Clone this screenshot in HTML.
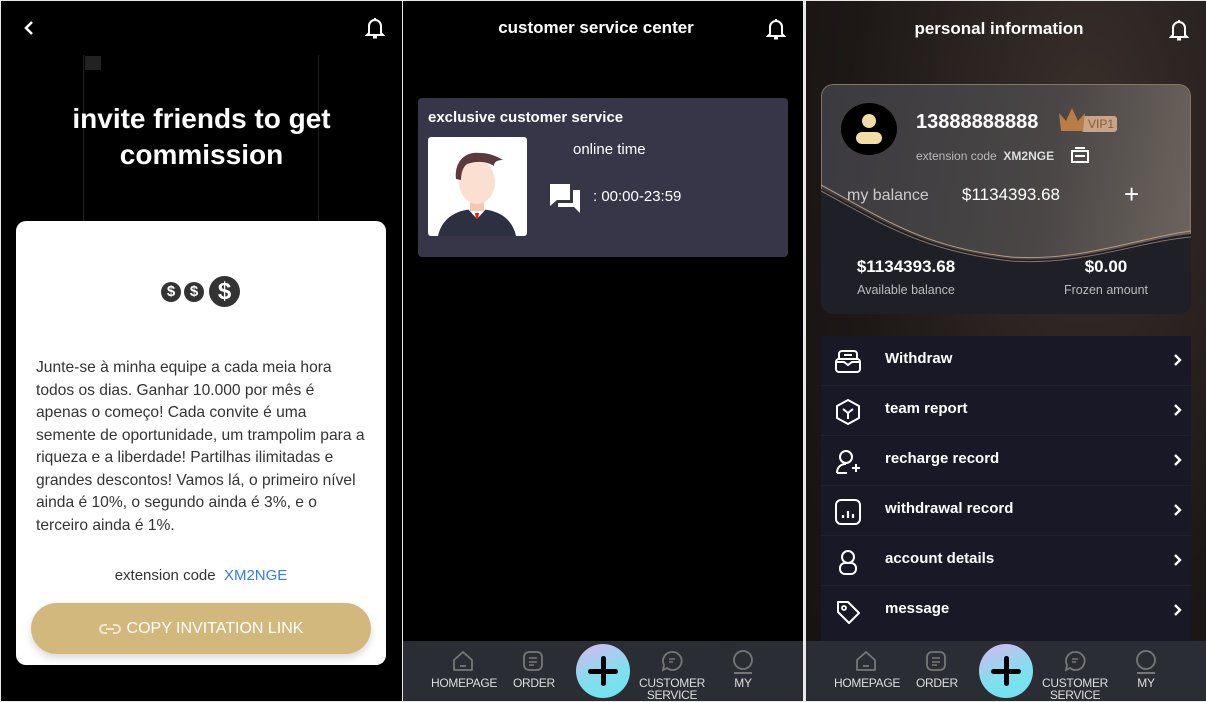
<!DOCTYPE html>
<html><head><meta charset="utf-8"><style>
*{margin:0;padding:0;box-sizing:border-box}
body{width:1206px;height:702px;background:#e8e8e8;font-family:"Liberation Sans",Arial,sans-serif;position:relative;overflow:hidden}
.p{position:absolute;top:1px;height:700px;overflow:hidden}
.a{position:absolute}
.w{color:#fff}
.b{font-weight:bold}
.nav{position:absolute;left:0;bottom:0;width:100%;height:60px;background:#2a2d34}
.nav .it{position:absolute;top:9px;text-align:center;color:#ddd;font-size:12px;line-height:12px;letter-spacing:-0.3px}
.nav .it svg{display:block;margin:0 auto 5px}
.plus{position:absolute;top:3px;width:54px;height:54px;border-radius:50%;background:linear-gradient(160deg,#d7b8f0,#7ee0ee 60%,#6fe3ec)}
.plus:before{content:"";position:absolute;left:12px;top:25px;width:30px;height:5px;background:#000;border-radius:3px}
.plus:after{content:"";position:absolute;left:25px;top:12px;width:5px;height:30px;background:#000;border-radius:3px}
.row{position:absolute;left:0;width:370px;height:50px;border-bottom:1px solid #20202e}
.row .t{position:absolute;left:64px;top:14px;color:#fff;font-weight:bold;font-size:15px}
.row svg.ic{position:absolute;left:14px;top:13px}
.row .ch{position:absolute;right:8px;top:17px}
</style></head><body>

<!-- LEFT -->
<div class="p" style="left:1px;width:401px;background:#000">
  <svg class="a" style="left:22px;top:19px" width="12" height="16" viewBox="0 0 12 16"><path d="M9 2L3 8l6 6" stroke="#fff" stroke-width="2.5" fill="none"/></svg>
  <svg class="a" style="left:364px;top:16px" width="20" height="22" viewBox="0 0 20 22"><path d="M4 16V9a6 6 0 0 1 12 0v7l2 2H2z" stroke="#fff" stroke-width="2" fill="none"/><rect x="8" y="19" width="4" height="2.5" fill="#fff"/><rect x="9" y="1" width="2" height="2" fill="#fff"/></svg>
  <div class="a" style="left:82px;top:54px;width:1px;height:166px;background:#222"></div>
  <div class="a" style="left:317px;top:54px;width:1px;height:166px;background:#222"></div>
  <div class="a" style="left:84px;top:55px;width:16px;height:14px;background:#222"></div>
  <div class="a w b" style="left:0;top:100px;width:401px;text-align:center;font-size:28px;line-height:36px">invite friends to get<br>commission</div>
  <div class="a" style="left:15px;top:220px;width:370px;height:444px;background:#fff;border-radius:10px">
    <div class="a" style="left:145px;top:55px">
      <span class="a" style="left:0;top:6px;width:20px;height:20px;border-radius:50%;background:#333;color:#fff;font-size:15px;font-weight:bold;text-align:center;line-height:20px">$</span>
      <span class="a" style="left:23px;top:6px;width:20px;height:20px;border-radius:50%;background:#333;color:#fff;font-size:15px;font-weight:bold;text-align:center;line-height:20px">$</span>
      <span class="a" style="left:48px;top:0;width:31px;height:31px;border-radius:50%;background:#333;color:#fff;font-size:24px;font-weight:bold;text-align:center;line-height:31px">$</span>
    </div>
    <div class="a" style="left:20px;top:136px;width:330px;font-size:15.6px;line-height:22.5px;color:#333">Junte-se à minha equipe a cada meia hora todos os dias. Ganhar 10.000 por mês é apenas o começo! Cada convite é uma semente de oportunidade, um trampolim para a riqueza e a liberdade! Partilhas ilimitadas e grandes descontos! Vamos lá, o primeiro nível ainda é 10%, o segundo ainda é 3%, e o terceiro ainda é 1%.</div>
    <div class="a" style="left:0;top:346px;width:370px;text-align:center;font-size:15px;color:#333">extension code&nbsp; <span style="color:#2f7cf6">XM2NGE</span></div>
    <div class="a" style="left:15px;top:382px;width:340px;height:51px;border-radius:26px;background:#d3b87e;box-shadow:0 4px 8px rgba(0,0,0,.15);color:#fff;font-size:16px;text-align:center;line-height:51px">
      <svg style="vertical-align:-3px;margin-right:6px" width="22" height="14" viewBox="0 0 22 14"><path d="M8 3H5a4 4 0 0 0 0 8h3M14 3h3a4 4 0 0 1 0 8h-3M7 7h8" stroke="#f0e6d0" stroke-width="2" fill="none"/></svg>COPY INVITATION LINK</div>
  </div>
</div>

<!-- MIDDLE -->
<div class="p" style="left:403px;width:400px;background:#000">
  <div class="a w b" style="left:0;top:17px;width:386px;text-align:center;font-size:17px">customer service center</div>
  <svg class="a" style="left:363px;top:17px" width="20" height="22" viewBox="0 0 20 22"><path d="M4 16V9a6 6 0 0 1 12 0v7l2 2H2z" stroke="#fff" stroke-width="2" fill="none"/><rect x="8" y="19" width="4" height="2.5" fill="#fff"/><rect x="9" y="1" width="2" height="2" fill="#fff"/></svg>
  <div class="a" style="left:15px;top:97px;width:370px;height:159px;background:#363648;border-radius:4px">
    <div class="a w b" style="left:10px;top:11px;font-size:15px">exclusive customer service</div>
    <div class="a" style="left:10px;top:39px;width:99px;height:99px;background:#fff;border-radius:3px;overflow:hidden">
      <svg width="99" height="99" viewBox="0 0 99 99"><path d="M10 99C14 80 30 72 49 72s35 8 39 27z" fill="#2d3040"/><path d="M40 72h18l-9 10z" fill="#fff"/><path d="M47 76h4l-1 6h-2z" fill="#d21"/><rect x="42" y="58" width="14" height="16" fill="#f3c8b2"/><ellipse cx="49" cy="45" rx="18" ry="22" fill="#fbe0d2"/><path d="M28 42c-2-18 10-28 24-26 10 0 18 4 23 7-6 0-9 2-9 6-6-4-16-6-27-2-4 3-6 9-6 16z" fill="#5a3a3a"/></svg>
    </div>
    <div class="a w" style="left:155px;top:43px;font-size:15px">online time</div>
    <svg class="a" style="left:131px;top:85px" width="32" height="30" viewBox="0 0 32 30"><path d="M1 1h20v16H8l-7 6z" fill="#fff"/><path d="M24 7h7v23l-6-6H9v-4h15z" fill="#fff"/></svg>
    <div class="a w" style="left:175px;top:90px;font-size:15px">: 00:00-23:59</div>
  </div>
  <div class="nav">
    <div class="it" style="left:28px;width:64px"><svg width="22" height="22" viewBox="0 0 22 22"><path d="M2 10L11 2l9 8v10H2z" stroke="#777" stroke-width="1.8" fill="none" stroke-linejoin="round"/><path d="M8 16h6" stroke="#777" stroke-width="1.8"/></svg>HOMEPAGE</div>
    <div class="it" style="left:110px;width:40px"><svg width="22" height="22" viewBox="0 0 22 22"><rect x="2" y="2" width="18" height="18" rx="5" stroke="#777" stroke-width="1.8" fill="none"/><path d="M7 8h8M7 12h8M7 15h5" stroke="#777" stroke-width="1.6"/></svg>ORDER</div>
    <div class="plus" style="left:173px"></div>
    <div class="it" style="left:236px;width:66px"><svg width="22" height="22" viewBox="0 0 22 22"><path d="M11 2a9 9 0 1 1-5 16l-4 2 1-5A9 9 0 0 1 11 2z" stroke="#777" stroke-width="1.8" fill="none"/><path d="M8 9h6M8 12h4" stroke="#777" stroke-width="1.5"/></svg>CUSTOMER<br>SERVICE</div>
    <div class="it" style="left:326px;width:28px"><svg width="22" height="24" viewBox="0 0 22 24" style="margin-bottom:3px"><circle cx="11" cy="10" r="9" stroke="#777" stroke-width="1.8" fill="none"/><path d="M2 23h18" stroke="#777" stroke-width="2"/></svg>MY</div>
  </div>
</div>

<!-- RIGHT -->
<div class="p" style="left:806px;width:400px;background:radial-gradient(ellipse at 70% 20%,#3a302c,#1d1816 60%,#151212)">
  <div class="a w b" style="left:0;top:18px;width:386px;text-align:center;font-size:17px">personal information</div>
  <svg class="a" style="left:363px;top:18px" width="20" height="22" viewBox="0 0 20 22"><path d="M4 16V9a6 6 0 0 1 12 0v7l2 2H2z" stroke="#fff" stroke-width="2" fill="none"/><rect x="8" y="19" width="4" height="2.5" fill="#fff"/><rect x="9" y="1" width="2" height="2" fill="#fff"/></svg>
  <div class="a" style="left:15px;top:83px;width:370px;height:230px;border-radius:12px;overflow:hidden;background:#1f1f28">
    <div class="a" style="left:0;top:0;width:370px;height:185px;background:linear-gradient(100deg,#3b3a3f,#4a4646 60%,#6d655e);border:1px solid #8a7460;border-radius:12px"></div>
    <svg class="a" style="left:0;top:95px" width="370" height="90" viewBox="0 0 370 90"><path d="M0 10C60 40 100 70 190 80 260 85 320 60 370 55V90H0z" fill="#1f1f28"/><path d="M0 6C60 38 100 68 190 78 260 83 320 58 370 52" stroke="#b89a80" stroke-width="1" fill="none"/><path d="M0 12C60 44 100 72 190 82 260 87 320 62 370 58" stroke="#8a7060" stroke-width="1" fill="none"/></svg>
    <div class="a" style="left:20px;top:19px;width:56px;height:52px;border-radius:50%;background:#000">
      <div class="a" style="left:21px;top:11px;width:14px;height:14px;border-radius:50%;background:#f1dca4"></div>
      <div class="a" style="left:15px;top:29px;width:26px;height:12px;border-radius:6px;background:#f1dca4"></div>
    </div>
    <div class="a w b" style="left:95px;top:27px;font-size:20px">13888888888</div>
    <div class="a" style="left:236px;top:21px;width:60px;height:30px">
      <div class="a" style="left:24px;top:11px;width:36px;height:16px;background:#c9a587;border-radius:3px;color:#8b5a3a;font-size:12px;line-height:16px;text-align:right;padding-right:3px">VIP1</div>
      <svg class="a" style="left:0;top:0" width="30" height="28" viewBox="0 0 30 28"><path d="M2 8l7 8 6-13 6 13 7-8-2 18H4z" fill="#b97c45"/></svg>
    </div>
    <div class="a" style="left:95px;top:65px;font-size:12px;color:#bbb">extension code&nbsp; <b style="color:#ddd">XM2NGE</b></div>
    <svg class="a" style="left:250px;top:63px" width="18" height="16" viewBox="0 0 18 16"><rect x="1" y="4" width="16" height="11" stroke="#fff" stroke-width="2" fill="none"/><path d="M4 1h10M4 9h10" stroke="#fff" stroke-width="2"/></svg>
    <div class="a" style="left:26px;top:103px;font-size:16px;color:#ccc">my balance</div>
    <div class="a w" style="left:141px;top:101px;font-size:17px">$1134393.68</div>
    <div class="a w" style="left:303px;top:95px;font-size:26px;font-weight:300">+</div>
    <div class="a w b" style="left:0;top:173px;width:170px;text-align:center;font-size:17px">$1134393.68</div>
    <div class="a" style="left:0;top:199px;width:170px;text-align:center;font-size:12.5px;color:#bbb">Available balance</div>
    <div class="a w b" style="left:200px;top:173px;width:170px;text-align:center;font-size:17px">$0.00</div>
    <div class="a" style="left:200px;top:199px;width:170px;text-align:center;font-size:12.5px;color:#bbb">Frozen amount</div>
  </div>
  <div class="a" style="left:15px;top:335px;width:370px;height:310px;background:#181826">
    <div class="row" style="top:0"><svg class="ic" width="26" height="26" viewBox="0 0 26 26"><rect x="4" y="2" width="18" height="10" rx="3" stroke="#fff" stroke-width="2" fill="none"/><rect x="1" y="10" width="24" height="13" rx="3" stroke="#fff" stroke-width="2" fill="#181826"/><path d="M1 13h8l4 3 4-3h8M9 6h8" stroke="#fff" stroke-width="2" fill="none"/></svg><div class="t">Withdraw</div><svg class="ch" width="10" height="14" viewBox="0 0 10 14"><path d="M2 2l5 5-5 5" stroke="#fff" stroke-width="2.4" fill="none"/></svg></div>
    <div class="row" style="top:50px"><svg class="ic" width="26" height="26" viewBox="0 0 26 26"><path d="M13 1l11 6v12l-11 6-11-6V7z" stroke="#fff" stroke-width="2" fill="none" stroke-linejoin="round"/><path d="M8 10l5 4 5-4M13 14v6" stroke="#fff" stroke-width="2" fill="none"/></svg><div class="t">team report</div><svg class="ch" width="10" height="14" viewBox="0 0 10 14"><path d="M2 2l5 5-5 5" stroke="#fff" stroke-width="2.4" fill="none"/></svg></div>
    <div class="row" style="top:100px"><svg class="ic" width="26" height="26" viewBox="0 0 26 26"><circle cx="11" cy="8" r="6" stroke="#fff" stroke-width="2" fill="none"/><path d="M2 24c0-6 4-9 9-9M17 19h8M21 15v8M2 24h10" stroke="#fff" stroke-width="2" fill="none"/></svg><div class="t">recharge record</div><svg class="ch" width="10" height="14" viewBox="0 0 10 14"><path d="M2 2l5 5-5 5" stroke="#fff" stroke-width="2.4" fill="none"/></svg></div>
    <div class="row" style="top:150px"><svg class="ic" width="26" height="26" viewBox="0 0 26 26"><rect x="1" y="1" width="24" height="24" rx="5" stroke="#fff" stroke-width="2" fill="none"/><path d="M8 16v3M13 12v7M18 15v4" stroke="#fff" stroke-width="2.2"/></svg><div class="t">withdrawal record</div><svg class="ch" width="10" height="14" viewBox="0 0 10 14"><path d="M2 2l5 5-5 5" stroke="#fff" stroke-width="2.4" fill="none"/></svg></div>
    <div class="row" style="top:200px"><svg class="ic" width="26" height="26" viewBox="0 0 26 26"><circle cx="13" cy="8" r="6" stroke="#fff" stroke-width="2" fill="none"/><rect x="5" y="14" width="16" height="11" rx="5" stroke="#fff" stroke-width="2" fill="none"/></svg><div class="t">account details</div><svg class="ch" width="10" height="14" viewBox="0 0 10 14"><path d="M2 2l5 5-5 5" stroke="#fff" stroke-width="2.4" fill="none"/></svg></div>
    <div class="row" style="top:250px;border:0"><svg class="ic" width="26" height="26" viewBox="0 0 26 26"><path d="M3 3h10l11 11-10 10L3 13z" stroke="#fff" stroke-width="2" fill="none" stroke-linejoin="round"/><circle cx="9" cy="9" r="2" stroke="#fff" stroke-width="1.8" fill="none"/></svg><div class="t">message</div><svg class="ch" width="10" height="14" viewBox="0 0 10 14"><path d="M2 2l5 5-5 5" stroke="#fff" stroke-width="2.4" fill="none"/></svg></div>
  </div>
  <div class="nav">
    <div class="it" style="left:28px;width:64px"><svg width="22" height="22" viewBox="0 0 22 22"><path d="M2 10L11 2l9 8v10H2z" stroke="#777" stroke-width="1.8" fill="none" stroke-linejoin="round"/><path d="M8 16h6" stroke="#777" stroke-width="1.8"/></svg>HOMEPAGE</div>
    <div class="it" style="left:110px;width:40px"><svg width="22" height="22" viewBox="0 0 22 22"><rect x="2" y="2" width="18" height="18" rx="5" stroke="#777" stroke-width="1.8" fill="none"/><path d="M7 8h8M7 12h8M7 15h5" stroke="#777" stroke-width="1.6"/></svg>ORDER</div>
    <div class="plus" style="left:173px"></div>
    <div class="it" style="left:236px;width:66px"><svg width="22" height="22" viewBox="0 0 22 22"><path d="M11 2a9 9 0 1 1-5 16l-4 2 1-5A9 9 0 0 1 11 2z" stroke="#777" stroke-width="1.8" fill="none"/><path d="M8 9h6M8 12h4" stroke="#777" stroke-width="1.5"/></svg>CUSTOMER<br>SERVICE</div>
    <div class="it" style="left:326px;width:28px"><svg width="22" height="24" viewBox="0 0 22 24" style="margin-bottom:3px"><circle cx="11" cy="10" r="9" stroke="#777" stroke-width="1.8" fill="none"/><path d="M2 23h18" stroke="#777" stroke-width="2"/></svg>MY</div>
  </div>
</div>
</body></html>
